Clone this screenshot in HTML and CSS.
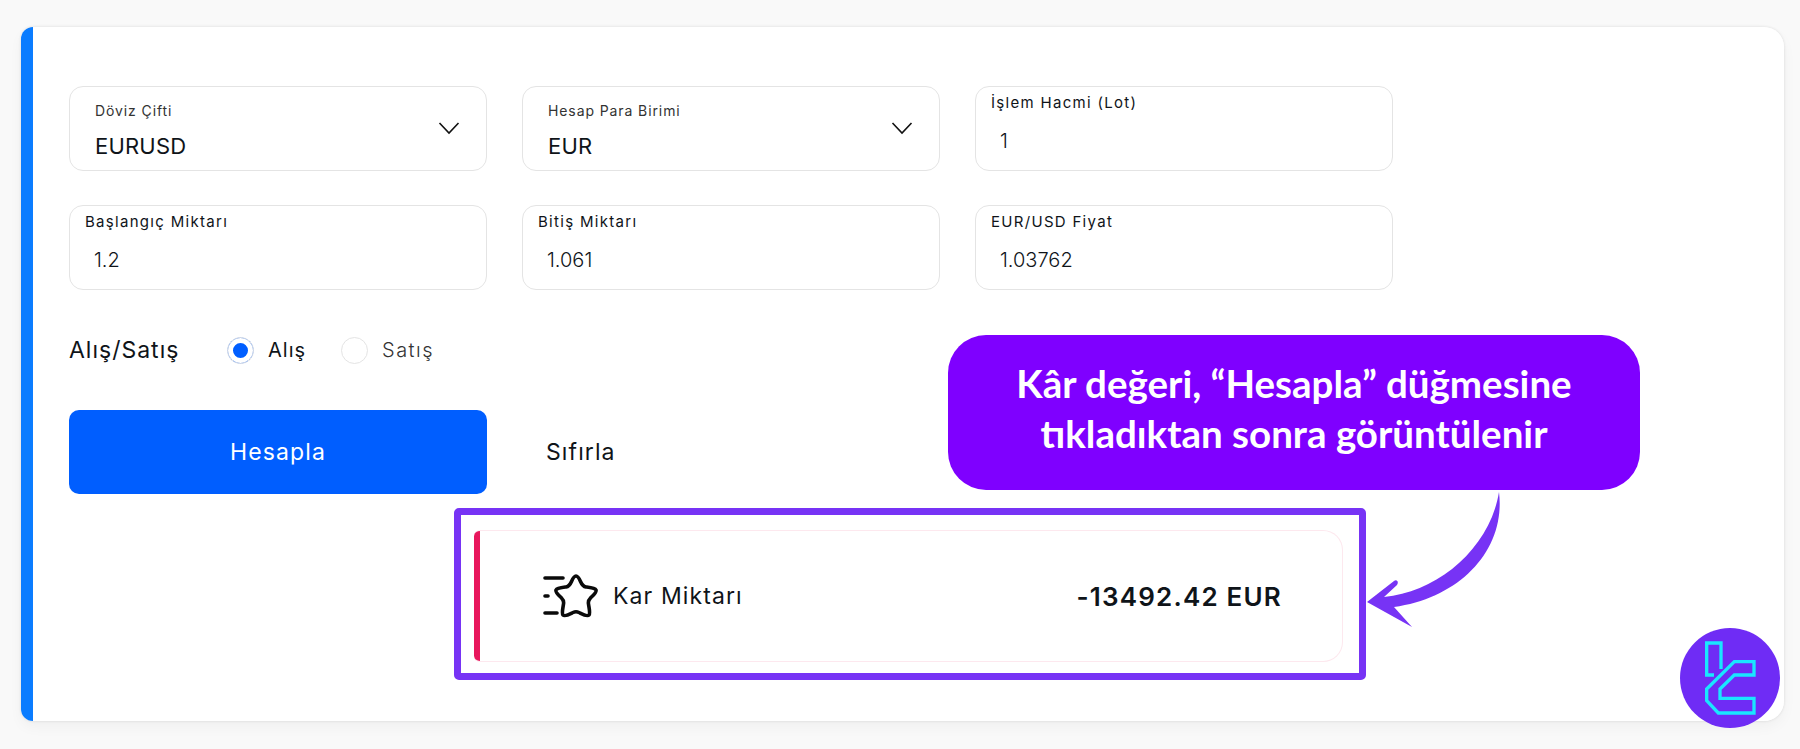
FILE: index.html
```html
<!DOCTYPE html>
<html lang="tr">
<head>
  <meta charset="utf-8">
  <title>Kar Hesaplayıcı</title>
  <link rel="stylesheet" href="styles.css">
</head>
<body>

<div class="card">
  <div class="fields">
    <div class="field select">
      <span class="selectLabel">Döviz Çifti</span>
      <span class="selectValue">EURUSD</span>
      <svg class="chevron" viewBox="0 0 22 14"><path d="M1.5 2 L11 12 L20.5 2"/></svg>
    </div>
    <div class="field select">
      <span class="selectLabel">Hesap Para Birimi</span>
      <span class="selectValue">EUR</span>
      <svg class="chevron" viewBox="0 0 22 14"><path d="M1.5 2 L11 12 L20.5 2"/></svg>
    </div>
    <div class="field">
      <span class="inputLabel">İşlem Hacmi (Lot)</span>
      <span class="inputValue">1</span>
    </div>
    <div class="field">
      <span class="inputLabel">Başlangıç Miktarı</span>
      <span class="inputValue">1.2</span>
    </div>
    <div class="field">
      <span class="inputLabel">Bitiş Miktarı</span>
      <span class="inputValue">1.061</span>
    </div>
    <div class="field">
      <span class="inputLabel">EUR/USD Fiyat</span>
      <span class="inputValue">1.03762</span>
    </div>
  </div>

  <div class="sideRow">
    <span class="sideTitle">Alış/Satış</span>
    <span class="radio checked"></span>
    <span class="radioText">Alış</span>
    <span class="radio"></span>
    <span class="radioText muted">Satış</span>
  </div>

  <div class="buttons">
    <button class="btnMain">Hesapla</button>
    <button class="btnReset">Sıfırla</button>
  </div>

  <div class="highlight">
    <div class="result">
      <svg class="resultIcon" viewBox="0 0 56 46">
        <path d="M2 5 H20 M2 23 H5 M2 40 H14"/>
        <path d="M33 3 C35 3 36 5 37.500 8.500 C39 12 40 13.500 43 14 C47 14.500 52 15 53 17 C54 19 50 22.500 47.500 25 C45.500 27 45 28.500 45.500 31 C46 35 47.500 40 46 42 C44 44 39 41 36 39.500 C34 38.500 32 38.500 30 39.500 C27 41 22 44 20 42 C18.500 40 20 35 20.500 31 C21 28.500 20.500 27 18.500 25 C16 22.500 12 19 13 17 C14 15 19 14.500 23 14 C26 13.500 27 12 28.500 8.500 C30 5 31 3 33 3 Z"/>
      </svg>
      <span class="resultLabel">Kar Miktarı</span>
      <span class="resultValue">-13492.42 EUR</span>
    </div>
  </div>
</div>

<!-- annotations on top of the screenshot -->
<div class="callout">Kâr değeri, “Hesapla” düğmesine<br>tıkladıktan sonra görüntülenir</div>

<svg class="arrow" viewBox="1360 488 145 145">
  <path d="M1367 602 L1394 581 C1397 579 1399 582 1397 585 L1384 597 C1438 592 1490 548 1499 492 C1506 550 1460 598 1394 607 L1412 627 L1367 602 Z"/>
</svg>

<svg class="logo" viewBox="120 57 300 300">
  <circle cx="270" cy="207" r="150"/>
  <path d="M243 180 V102 H200 V198 H222"/>
  <path d="M283 158 H342 V198 H283 L240 240 V268 H342 V312 H235 L200 275 V240 Z"/>
</svg>

</body>
</html>
```

FILE: styles.css
```css
html, body {
  margin: 0;
  height: 749px;
  overflow: hidden;
  background-color: #f9f9f9;
  font-family: Inter, "Liberation Sans", sans-serif;
  color: #0f1419;
}

.card {
  position: relative;
  box-sizing: border-box;
  width: 1763px;
  height: 694px;
  margin: 27px 0 0 21px;
  padding: 59px 36px 0 48px;
  background: linear-gradient(to right, #0a7cff 12px, #fff 12px);
  border-radius: 12px 20px 20px 12px;
  box-shadow: 0 0 3px rgba(0,0,0,0.12), 0 6px 14px rgba(0,0,0,0.04);
}

.fields {
  display: grid;
  grid-template-columns: repeat(3, 418px);
  grid-auto-rows: 85px;
  column-gap: 35px;
  row-gap: 34px;
}

.field {
  position: relative;
  box-sizing: border-box;
  display: flex;
  flex-direction: column;
  padding: 6px 15px;
  border: 1.5px solid #e4e4e4;
  border-radius: 14px;
}

.select {
  padding: 14px 25px;
}

.selectLabel {
  font-size: 14px;
  line-height: 20px;
  letter-spacing: 0.9px;
  color: #333;
}

.selectValue {
  margin-top: 12px;
  font-size: 22px;
  line-height: 26px;
  letter-spacing: 0.2px;
}

.inputLabel {
  font-size: 15px;
  line-height: 20px;
  letter-spacing: 1.3px;
}

.inputValue {
  margin: 15px 0 0 9px;
  font-size: 20px;
  line-height: 26px;
  font-weight: 300;
}

.chevron {
  position: absolute;
  right: 26px;
  top: 34px;
  width: 22px;
  height: 14px;
  fill: none;
  stroke: #111;
  stroke-width: 1.6;
}

.sideRow {
  display: flex;
  align-items: center;
  height: 30px;
  margin-top: 45px;
}

.sideTitle {
  width: 158px;
  font-size: 23px;
  letter-spacing: 1px;
}

.radio {
  box-sizing: border-box;
  width: 27px;
  height: 27px;
  border: 1.5px solid #e4e4e4;
  border-radius: 50%;
}

.checked {
  background-color: #005eff;
  box-shadow: inset 0 0 0 5px #fff;
}

.radioText {
  width: 73px;
  margin-left: 14px;
  font-size: 20px;
  letter-spacing: 1px;
}

.muted {
  color: #333;
  font-weight: 300;
  letter-spacing: 1.5px;
}

.buttons {
  display: flex;
  align-items: center;
  margin-top: 45px;
}

button {
  border: none;
  font-family: inherit;
  font-size: 23px;
  letter-spacing: 1.1px;
}

.btnMain {
  width: 418px;
  height: 84px;
  background-color: #005eff;
  color: #fff;
  border-radius: 10px;
}

.btnReset {
  margin-left: 59px;
  padding: 0;
  background-color: transparent;
  color: #0f1419;
}

.highlight {
  box-sizing: border-box;
  width: 912px;
  height: 172px;
  margin: 14px 0 0 385px;
  padding: 15px 16px 11px 13px;
  border: 7px solid #7733f5;
  border-radius: 5px;
}

.result {
  box-sizing: border-box;
  display: flex;
  align-items: center;
  height: 132px;
  padding: 0 60px 0 69px;
  border: 1px solid #fde8ee;
  border-left: none;
  border-radius: 6px 20px 20px 6px;
  background: linear-gradient(to right, #e8175d 6px, #fff 6px);
}

.resultIcon {
  width: 56px;
  height: 46px;
  fill: none;
  stroke: #0a0a0a;
  stroke-width: 3.6;
  stroke-linecap: round;
  stroke-linejoin: round;
}

.resultLabel {
  margin-left: 14px;
  font-size: 23px;
  letter-spacing: 1.1px;
}

.resultValue {
  margin-left: auto;
  font-size: 26px;
  font-weight: 600;
  letter-spacing: 1.2px;
}

.callout {
  position: absolute;
  left: 948px;
  top: 335px;
  box-sizing: border-box;
  width: 692px;
  height: 155px;
  padding-top: 23px;
  background-color: #7f00ff;
  border-radius: 38px;
  color: #fff;
  font-family: Lato, sans-serif;
  font-size: 38.500px;
  font-weight: 700;
  line-height: 50px;
  text-align: center;
}

.arrow {
  position: absolute;
  left: 1360px;
  top: 488px;
  width: 145px;
  height: 145px;
  fill: #7733f5;
}

.logo {
  position: absolute;
  left: 1680px;
  top: 628px;
  width: 100px;
  height: 100px;
}

.logo circle {
  fill: #6f2cf5;
}

.logo path {
  fill: none;
  stroke: #19e6ff;
  stroke-width: 10;
}
```
